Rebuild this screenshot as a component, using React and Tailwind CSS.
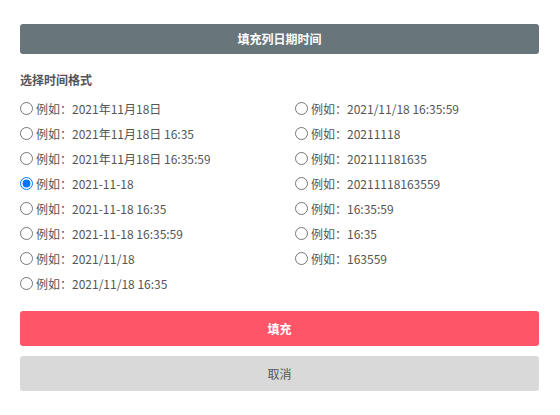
import { useState } from 'react';

const leftOptions = [
  '2021年11月18日',
  '2021年11月18日 16:35',
  '2021年11月18日 16:35:59',
  '2021-11-18',
  '2021-11-18 16:35',
  '2021-11-18 16:35:59',
  '2021/11/18',
  '2021/11/18 16:35',
];

const rightOptions = [
  '2021/11/18 16:35:59',
  '20211118',
  '202111181635',
  '20211118163559',
  '16:35:59',
  '16:35',
  '163559',
];

const FormatOption = ({ value, checked, onChange }) => (
  <label className="flex items-center h-[25px] cursor-pointer">
    <input
      type="radio"
      name="format"
      checked={checked}
      onChange={onChange}
      className="m-0 w-[13px] h-[13px] shrink-0"
    />
    <span className="ml-[3px] max-w-[174px] overflow-hidden whitespace-nowrap">
      例如：{value}
    </span>
  </label>
);

const App = () => {
  const [selected, setSelected] = useState('2021-11-18');

  return (
    <div
      className="w-[560px] h-[415px] bg-white px-[20px] pt-[24px] text-[12px] text-[#555]"
      style={{ fontFamily: '"Noto Sans CJK SC", sans-serif' }}
    >
      <button
        type="button"
        className="w-[519px] h-[30px] rounded-[3px] bg-[#68757a] text-white font-bold text-[12px]"
      >
        填充列日期时间
      </button>

      <div className="mt-[18px] leading-[16px] font-bold">选择时间格式</div>

      <div className="mt-[8px] grid grid-cols-[275px_1fr]">
        <div className="flex flex-col">
          {leftOptions.map((opt) => (
            <FormatOption
              key={opt}
              value={opt}
              checked={selected === opt}
              onChange={() => setSelected(opt)}
            />
          ))}
        </div>
        <div className="flex flex-col">
          {rightOptions.map((opt) => (
            <FormatOption
              key={opt}
              value={opt}
              checked={selected === opt}
              onChange={() => setSelected(opt)}
            />
          ))}
        </div>
      </div>

      <button
        type="button"
        className="mt-[15px] w-[519px] h-[35px] rounded-[3px] bg-[#fe5668] text-white font-bold text-[12px]"
      >
        填充
      </button>
      <button
        type="button"
        className="mt-[10px] w-[519px] h-[35px] rounded-[3px] bg-[#d9d9d9] text-[#555] text-[12px]"
      >
        取消
      </button>
    </div>
  );
};

export default App;
